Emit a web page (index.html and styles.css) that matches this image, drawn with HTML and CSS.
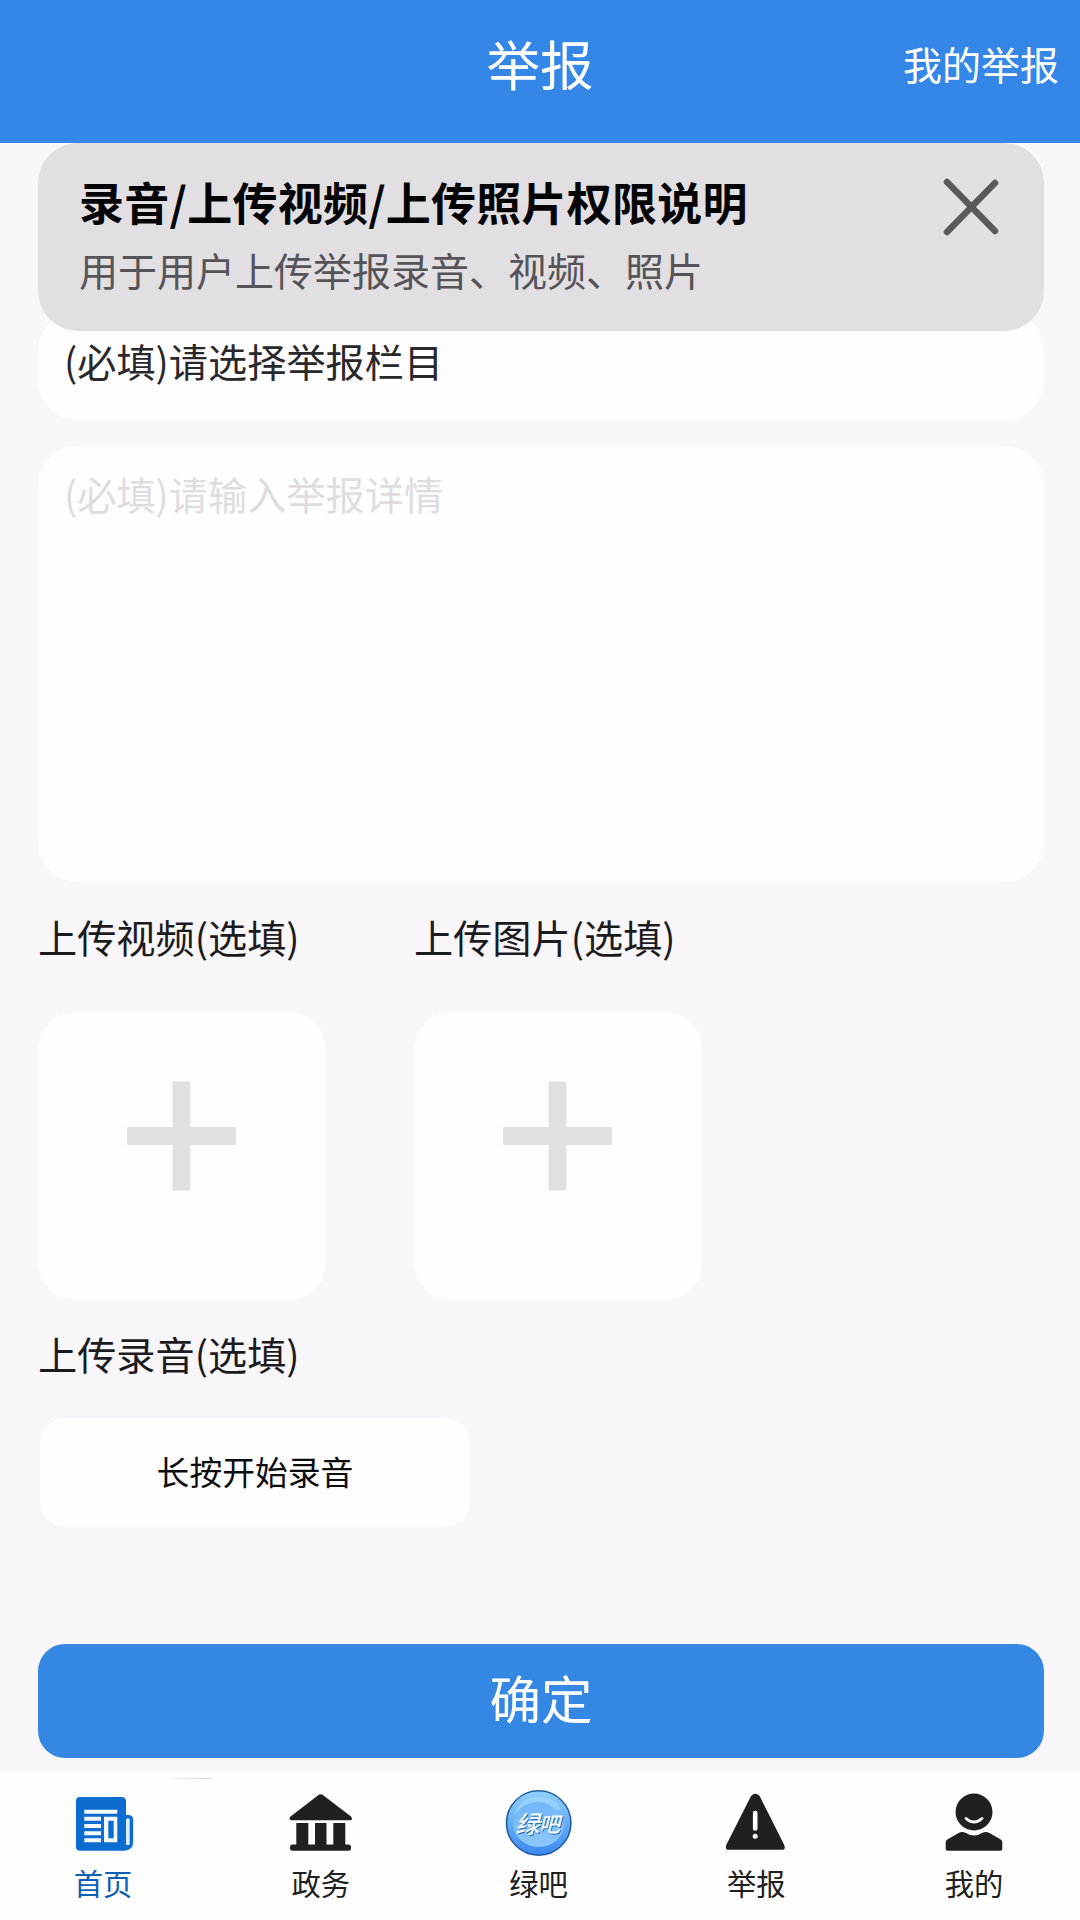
FILE: index.html
```html
<!DOCTYPE html>
<html lang="zh-CN">
<head>
<meta charset="utf-8">
<title>举报</title>
<link rel="stylesheet" href="styles.css">
</head>
<body>
<div class="page">
  <header class="header">
    <span class="header-side"></span>
    <h1 class="header-title">举报</h1>
    <a class="header-side header-link">我的举报</a>
  </header>

  <main class="content">
    <section class="notice">
      <div class="notice-text">
        <h2 class="notice-title">录音/上传视频/上传照片权限说明</h2>
        <p class="notice-desc">用于用户上传举报录音、视频、照片</p>
      </div>
      <svg class="notice-close" viewBox="0 0 56 58"><path d="M4 4 52 53M52 5 4 54"/></svg>
    </section>

    <div class="select">(必填)请选择举报栏目</div>
    <div class="detail">(必填)请输入举报详情</div>

    <div class="uploads">
      <div class="upload">
        <div class="label">上传视频(选填)</div>
        <div class="upload-box"><svg class="plus" viewBox="0 0 110 110"><path d="M46 0h18v46h46v18H64v46H46V64H0V46h46z"/></svg></div>
      </div>
      <div class="upload">
        <div class="label">上传图片(选填)</div>
        <div class="upload-box"><svg class="plus" viewBox="0 0 110 110"><path d="M46 0h18v46h46v18H64v46H46V64H0V46h46z"/></svg></div>
      </div>
    </div>

    <div class="label label-audio">上传录音(选填)</div>
    <div class="record">长按开始录音</div>
    <div class="submit">确定</div>
  </main>

  <nav class="tabs">
    <div class="tab tab-active">
      <svg class="icon" viewBox="0 0 72 72">
        <path fill="#0d6ccf" d="M13 10h41.500q4.500 0 4.500 4.500V28h2q5.200 0 5.200 5v21.500q0 9.200-9.200 9.200H13q-4 0-4-4V14q0-4 4-4z"/>
        <path fill="#f2faff" d="M17.300 22.700h33v4h-33zM17.300 29.700H34v4H17.300zM17.300 37H34v4H17.300zM17.300 44.300H34v4H17.300zM17.300 51.300H34v4H17.300z"/>
        <path fill="#f2faff" fill-rule="evenodd" d="M37 29.700h13.300v25.600H37zM41.300 33.700v17.600h5.400V33.700z"/>
        <rect fill="#d9efff" x="59" y="31.500" width="3.700" height="26.500" rx="1"/>
      </svg>
      <span>首页</span>
    </div>
    <div class="tab">
      <svg class="icon" viewBox="0 0 72 72">
        <path d="M33.500 8q2.200-1.700 4.400 0L66 29.500q2.500 3.800-1 3.800H7q-4-.3-1.500-3.800zM11.300 36h12v22h-12zM30 36h11.500v22H30zM48.300 36h12v22h-12z"/>
        <rect x="5" y="57.500" width="61" height="6.200" rx="2.500"/>
      </svg>
      <span>政务</span>
    </div>
    <div class="tab">
      <svg class="icon" viewBox="0 0 72 72">
        <defs>
          <linearGradient id="rim" x1="0" y1="0" x2="0" y2="1"><stop offset="0" stop-color="#8fd0fb"/><stop offset=".5" stop-color="#68aef4"/><stop offset="1" stop-color="#3988ee"/></linearGradient>
          <linearGradient id="face" x1="0" y1="0" x2="0" y2="1"><stop offset="0" stop-color="#71b5f5"/><stop offset="1" stop-color="#8cc6fb"/></linearGradient>
        </defs>
        <circle cx="35.700" cy="36" r="32.200" fill="url(#rim)" stroke="#235f9f" stroke-width="1.600"/>
        <ellipse cx="35.700" cy="37" rx="25.500" ry="23" fill="url(#face)"/>
        <path d="M11 28Q17 10 36 10q15 0 22 12l-5 2Q46 15 34 15 20 16 11 28z" fill="#a9e0ff" opacity=".5"/>
        <g class="badge-text"><text class="badge-shadow" x="13.500" y="46.500">绿</text><text x="12.500" y="45.500">绿</text><text class="badge-shadow badge-small" x="37" y="45.500">吧</text><text class="badge-small" x="36" y="44.500">吧</text></g>
      </svg>
      <span>绿吧</span>
    </div>
    <div class="tab">
      <svg class="icon" viewBox="0 0 72 72">
        <path d="M31 9q4.300-4.500 8.600 0L64 57.500q2.200 5.300-2 5.300H8.500q-4 0-2-5.300z"/>
        <rect x="32.900" y="23.800" width="4.600" height="20" rx="2.300" fill="#fff"/><circle cx="35.200" cy="49.200" r="2.500" fill="#fff"/>
      </svg>
      <span>举报</span>
    </div>
    <div class="tab">
      <svg class="icon" viewBox="0 0 72 72">
        <circle cx="36" cy="25" r="18.500"/>
        <path d="M28 31.500q8 7 16 0" fill="none" stroke="#fff" stroke-width="2.800" stroke-linecap="round"/>
        <path d="M7.700 55q0-1.500 2-2.700L20.500 46q3.500-2 7-.2 8.500 5.500 17 0 3.500-1.800 7 .2l10.800 6.300q2 1.200 2 2.700v6.700q0 2-2 2H9.700q-2 0-2-2z"/>
      </svg>
      <span>我的</span>
    </div>
  </nav>
</div>
</body>
</html>
```
FILE: styles.css
```css
* { box-sizing: border-box; margin: 0; padding: 0; }

body {
  background: #f8f6f9;
  color: #1c1b1e;
  font-family: "Noto Sans CJK SC", sans-serif;
  font-size: 39.2px;
}

.page {
  width: 1080px;
  height: 1920px;
  display: flex;
  flex-direction: column;
  overflow: hidden;
}

.header {
  flex: none;
  height: 143px;
  padding: 0 21px 17px;
  display: flex;
  align-items: center;
  background: #3587e7;
  color: #fff;
}
.header-side { flex: 1; font-size: 39px; line-height: 56px; }
.header-link { text-align: right; }
.header-title { font-size: 53.500px; line-height: 76px; font-weight: 400; }

.content {
  flex: none;
  height: 1629px;
  padding: 0 36px 0 38px;
  display: flex;
  flex-direction: column;
}

.notice {
  flex: none;
  height: 188px;
  padding: 33px 45px 0 41px;
  display: flex;
  justify-content: space-between;
  border-radius: 40px;
  background: #e1dfe2;
  position: relative;
  z-index: 1;
}
.notice-title { font-size: 45px; line-height: 52px; font-weight: 700; letter-spacing: 0.250px; color: #050507; }
.notice-desc { margin-top: 13px; font-size: 39px; line-height: 56px; color: #565458; }
.notice-close { width: 56px; height: 58px; margin-top: 2px; }
.notice-close path { stroke: #5b595c; stroke-width: 6.500; stroke-linecap: round; fill: none; }

.select {
  flex: none;
  height: 109px;
  margin-top: -20px;
  padding: 21px 26px 0;
  line-height: 56px;
  border-radius: 40px;
  background: #fefefe;
  color: #29282b;
}

.detail {
  flex: none;
  height: 436px;
  margin-top: 26px;
  padding: 19px 26px;
  line-height: 56px;
  border-radius: 40px;
  background: #fefefe;
  color: #dfdde0;
}

.uploads { display: flex; gap: 88px; margin-top: 26px; }
.upload { width: 288px; }
.label { line-height: 56px; white-space: nowrap; }
.upload-box {
  height: 288px;
  margin-top: 48px;
  padding-top: 69px;
  border-radius: 38px;
  background: #fefefe;
}
.plus { display: block; width: 109px; height: 110px; margin: 0 auto; fill: #e1dfe2; }
.upload-box .plus { margin-left: 89px; }

.label-audio { margin-top: 25px; }

.record {
  width: 430px;
  height: 109px;
  margin: 37px 0 0 2px;
  border-radius: 26px;
  background: #fefefe;
  color: #0d0c0e;
  font-size: 32.800px;
  line-height: 105px;
  text-align: center;
}

.submit {
  height: 114px;
  margin-top: 117px;
  border-radius: 27px;
  background: #3587e4;
  color: #fff;
  font-size: 51.500px;
  line-height: 106px;
  text-align: center;
}

.tabs {
  flex: 1;
  padding: 15px 56px 0 53px;
  display: flex;
  justify-content: space-between;
  background: linear-gradient(90deg, #e9eef0, #d3d5d8) 172px 6px / 40px 1px no-repeat #fefefe;
}
.tab {
  width: 100px;
  display: flex;
  flex-direction: column;
  align-items: center;
  font-size: 29.300px;
  line-height: 46px;
  color: #202021;
}
.tab-active { color: #0b5fb5; }
.icon { width: 72px; height: 72px; fill: #202021; }
.badge-text { font-size: 24px; font-weight: 500; font-style: italic; fill: #f4fcff; }
.badge-small { font-size: 21px; }
.badge-shadow { fill: #2d6ea9; }
```
